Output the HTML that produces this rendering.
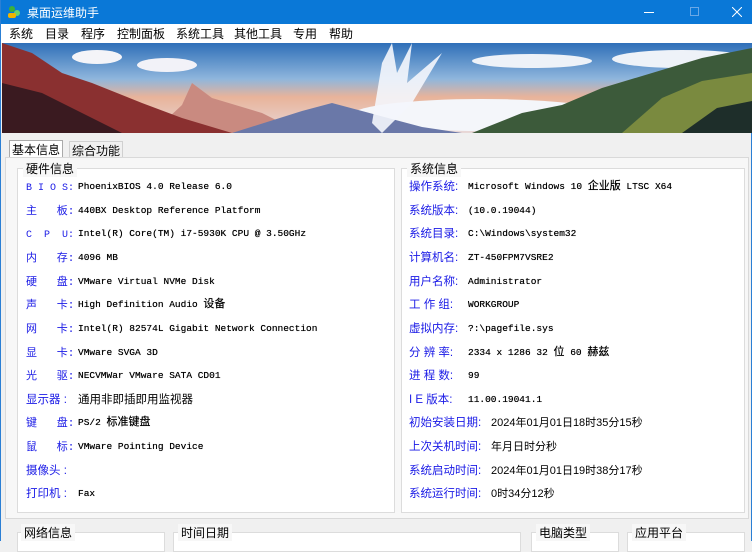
<!DOCTYPE html>
<html><head><meta charset="utf-8"><style>
*{margin:0;padding:0;box-sizing:border-box}
body{width:752px;height:541px;overflow:hidden;background:#f0f0f0;font-family:"Liberation Sans","Noto Sans CJK SC",sans-serif;position:relative;border-left:1px solid #2b7fd4;border-right:1px solid #2b7fd4}
.title{position:absolute;left:0;top:0;width:752px;height:24px;background:#0a78d7;color:#fff;font-size:12px}
.title .t{position:absolute;left:26px;top:4px}
.menu{position:absolute;left:0;top:24px;width:752px;height:19px;background:#fff;font-size:12px;color:#000}
.menu span{position:absolute;top:1px}
.banner{position:absolute;left:1px;top:43px;width:750px;height:90px}
.tabs span{position:absolute;font-size:12px;top:141px;height:17px;padding:0 2px}
.page{position:absolute;left:4px;top:157px;width:744px;height:362px;background:#f7f7f7;border:1px solid #d9d9d9}
.grp{position:absolute;border:1px solid #dcdcdc;background:#fff}
.gl{position:absolute;font-size:12px;background:#f7f7f7;padding:0 3px;color:#000}
.row{position:absolute;font-size:11px;white-space:nowrap;height:14px;line-height:14px}
.lb{color:#1a1ae6;font-family:"Liberation Mono","Noto Sans CJK SC",monospace}
.v{font-family:"Liberation Mono","Noto Sans CJK SC",monospace;font-size:9.5px;color:#000;text-shadow:0 0 .4px #000}
.vc{font-size:11.5px;color:#000}
.rl{color:#1a1ae6;font-size:11.5px}
</style></head><body>
<div class="title">
<svg style="position:absolute;left:6px;top:5px" width="14" height="14" viewBox="0 0 14 14"><circle cx="5" cy="4" r="3" fill="#3bb03b"/><circle cx="10" cy="8" r="3" fill="#6bd36b"/><rect x="1" y="8" width="8" height="5" rx="2" fill="#f2b400"/></svg>
<span class="t">桌面运维助手</span>
<div style="position:absolute;left:643px;top:12px;width:10px;height:1px;background:#fff"></div>
<div style="position:absolute;left:689px;top:7px;width:9px;height:9px;border:1px solid #6aa8e6"></div>
<svg style="position:absolute;left:731px;top:7px" width="10" height="10"><path d="M0 0L10 10M10 0L0 10" stroke="#fff" stroke-width="1"/></svg>
</div>
<div class="menu"><span style="left:8px">系统</span><span style="left:44px">目录</span><span style="left:80px">程序</span><span style="left:116px">控制面板</span><span style="left:175px">系统工具</span><span style="left:233px">其他工具</span><span style="left:292px">专用</span><span style="left:328px">帮助</span></div>
<svg class="banner" viewBox="0 0 750 90" preserveAspectRatio="none">
<defs><linearGradient id="sk" x1="0" y1="0" x2="0" y2="1"><stop offset="0" stop-color="#2f6fb8"/><stop offset=".4" stop-color="#8fb6dc"/><stop offset=".6" stop-color="#e8b39a"/><stop offset="1" stop-color="#e8d8d8"/></linearGradient></defs>
<rect width="750" height="90" fill="url(#sk)"/>
<ellipse cx="95" cy="14" rx="25" ry="7" fill="#f4f4f8"/><ellipse cx="165" cy="22" rx="30" ry="7" fill="#f2f2f8"/>
<ellipse cx="530" cy="18" rx="60" ry="7" fill="#eef2f8"/><ellipse cx="680" cy="16" rx="70" ry="9" fill="#eef2f8"/>
<ellipse cx="480" cy="72" rx="130" ry="16" fill="#f4f6fa"/><ellipse cx="700" cy="65" rx="60" ry="14" fill="#f4f6fa"/>
<path d="M150 90L180 62L190 40L210 55L260 70L300 90Z" fill="#c98a80"/>
<path d="M0 0L30 10L60 30L90 40L140 60L180 75L230 90L0 90Z" fill="#8a3030"/>
<path d="M0 40L40 50L80 70L120 90L0 90Z" fill="#3a1a20"/>
<path d="M230 90L300 68L330 60L360 68L420 84L460 90Z" fill="#6a78a8"/>
<path d="M470 90L520 70L560 62L600 45L650 30L700 15L750 5L750 90Z" fill="#3c5a3a"/>
<path d="M620 90L660 55L700 38L750 30L750 90Z" fill="#7a8a3f"/>
<path d="M680 90L715 65L750 58L750 90Z" fill="#1e2e2a"/>
<path d="M370 80L380 20L390 0L395 30L410 0L405 40L440 10L410 60L380 90Z" fill="#f4f6fc" opacity=".9"/>
</svg>
<div class="tabs"><span style="left:8px;top:140px;background:#fff;border:1px solid #aaa;border-bottom:none">基本信息</span><span style="left:68px;border:1px solid #d0d0d0;border-bottom:none">综合功能</span></div>
<div class="page"></div>
<div class="grp" style="left:16px;top:168px;width:378px;height:345px"></div>
<div class="gl" style="left:22px;top:160px">硬件信息</div>
<div class="grp" style="left:400px;top:168px;width:344px;height:345px"></div>
<div class="gl" style="left:406px;top:160px">系统信息</div>
<div class="grp" style="left:16px;top:532px;width:148px;height:20px"></div><div class="gl" style="left:20px;top:524px">网络信息</div>
<div class="grp" style="left:172px;top:532px;width:348px;height:20px"></div><div class="gl" style="left:177px;top:524px">时间日期</div>
<div class="grp" style="left:530px;top:532px;width:88px;height:20px"></div><div class="gl" style="left:535px;top:524px">电脑类型</div>
<div class="grp" style="left:626px;top:532px;width:118px;height:20px"></div><div class="gl" style="left:631px;top:524px">应用平台</div>

<div class="row" style="left:25px;top:180px"><span class="lb" style="font-size:10px">B I O S:</span></div><div class="row v" style="left:77px;top:180px">PhoenixBIOS 4.0 Release 6.0</div>
<div class="row" style="left:25px;top:204px"><span class="lb">主&nbsp;&nbsp;&nbsp;板:</span></div><div class="row v" style="left:77px;top:204px">440BX Desktop Reference Platform</div>
<div class="row" style="left:25px;top:227px"><span class="lb" style="font-size:10px">C&nbsp;&nbsp;P&nbsp;&nbsp;U:</span></div><div class="row v" style="left:77px;top:227px">Intel(R) Core(TM) i7-5930K CPU @ 3.50GHz</div>
<div class="row" style="left:25px;top:251px"><span class="lb">内&nbsp;&nbsp;&nbsp;存:</span></div><div class="row v" style="left:77px;top:251px">4096 MB</div>
<div class="row" style="left:25px;top:275px"><span class="lb">硬&nbsp;&nbsp;&nbsp;盘:</span></div><div class="row v" style="left:77px;top:275px">VMware Virtual NVMe Disk</div>
<div class="row" style="left:25px;top:298px"><span class="lb">声&nbsp;&nbsp;&nbsp;卡:</span></div><div class="row v" style="left:77px;top:298px">High Definition Audio <span style="font-size:11px">设备</span></div>
<div class="row" style="left:25px;top:322px"><span class="lb">网&nbsp;&nbsp;&nbsp;卡:</span></div><div class="row v" style="left:77px;top:322px">Intel(R) 82574L Gigabit Network Connection</div>
<div class="row" style="left:25px;top:346px"><span class="lb">显&nbsp;&nbsp;&nbsp;卡:</span></div><div class="row v" style="left:77px;top:346px">VMware SVGA 3D</div>
<div class="row" style="left:25px;top:369px"><span class="lb">光&nbsp;&nbsp;&nbsp;驱:</span></div><div class="row v" style="left:77px;top:369px">NECVMWar VMware SATA CD01</div>
<div class="row" style="left:25px;top:393px"><span class="rl">显示器 :</span></div><div class="row vc" style="left:77px;top:393px">通用非即插即用监视器</div>
<div class="row" style="left:25px;top:416px"><span class="lb">键&nbsp;&nbsp;&nbsp;盘:</span></div><div class="row v" style="left:77px;top:416px">PS/2 <span style="font-size:11px">标准键盘</span></div>
<div class="row" style="left:25px;top:440px"><span class="lb">鼠&nbsp;&nbsp;&nbsp;标:</span></div><div class="row v" style="left:77px;top:440px">VMware Pointing Device</div>
<div class="row" style="left:25px;top:464px"><span class="rl">摄像头 :</span></div>
<div class="row" style="left:25px;top:487px"><span class="rl">打印机 :</span></div><div class="row v" style="left:77px;top:487px">Fax</div>

<div class="row" style="left:408px;top:180px"><span class="rl">操作系统:</span></div><div class="row v" style="left:467px;top:180px">Microsoft Windows 10 <span style="font-size:11px">企业版</span> LTSC X64</div>
<div class="row" style="left:408px;top:204px"><span class="rl">系统版本:</span></div><div class="row v" style="left:467px;top:204px">(10.0.19044)</div>
<div class="row" style="left:408px;top:227px"><span class="rl">系统目录:</span></div><div class="row v" style="left:467px;top:227px">C:\Windows\system32</div>
<div class="row" style="left:408px;top:251px"><span class="rl">计算机名:</span></div><div class="row v" style="left:467px;top:251px">ZT-450FPM7VSRE2</div>
<div class="row" style="left:408px;top:275px"><span class="rl">用户名称:</span></div><div class="row v" style="left:467px;top:275px">Administrator</div>
<div class="row" style="left:408px;top:298px"><span class="rl">工 作 组:</span></div><div class="row v" style="left:467px;top:298px">WORKGROUP</div>
<div class="row" style="left:408px;top:322px"><span class="rl">虚拟内存:</span></div><div class="row v" style="left:467px;top:322px">?:\pagefile.sys</div>
<div class="row" style="left:408px;top:346px"><span class="rl">分 辨 率:</span></div><div class="row v" style="left:467px;top:346px">2334 x 1286 32 <span style="font-size:11px">位</span> 60 <span style="font-size:11px">赫兹</span></div>
<div class="row" style="left:408px;top:369px"><span class="rl">进 程 数:</span></div><div class="row v" style="left:467px;top:369px">99</div>
<div class="row" style="left:408px;top:393px"><span class="rl">I E 版本:</span></div><div class="row v" style="left:467px;top:393px">11.00.19041.1</div>
<div class="row" style="left:408px;top:416px"><span class="rl">初始安装日期:</span></div><div class="row vc" style="left:490px;top:416px;font-size:11px">2024年01月01日18时35分15秒</div>
<div class="row" style="left:408px;top:440px"><span class="rl">上次关机时间:</span></div><div class="row vc" style="left:490px;top:440px;font-size:11px">年月日时分秒</div>
<div class="row" style="left:408px;top:464px"><span class="rl">系统启动时间:</span></div><div class="row vc" style="left:490px;top:464px;font-size:11px">2024年01月01日19时38分17秒</div>
<div class="row" style="left:408px;top:487px"><span class="rl">系统运行时间:</span></div><div class="row vc" style="left:490px;top:487px;font-size:11px">0时34分12秒</div>
</body></html>
